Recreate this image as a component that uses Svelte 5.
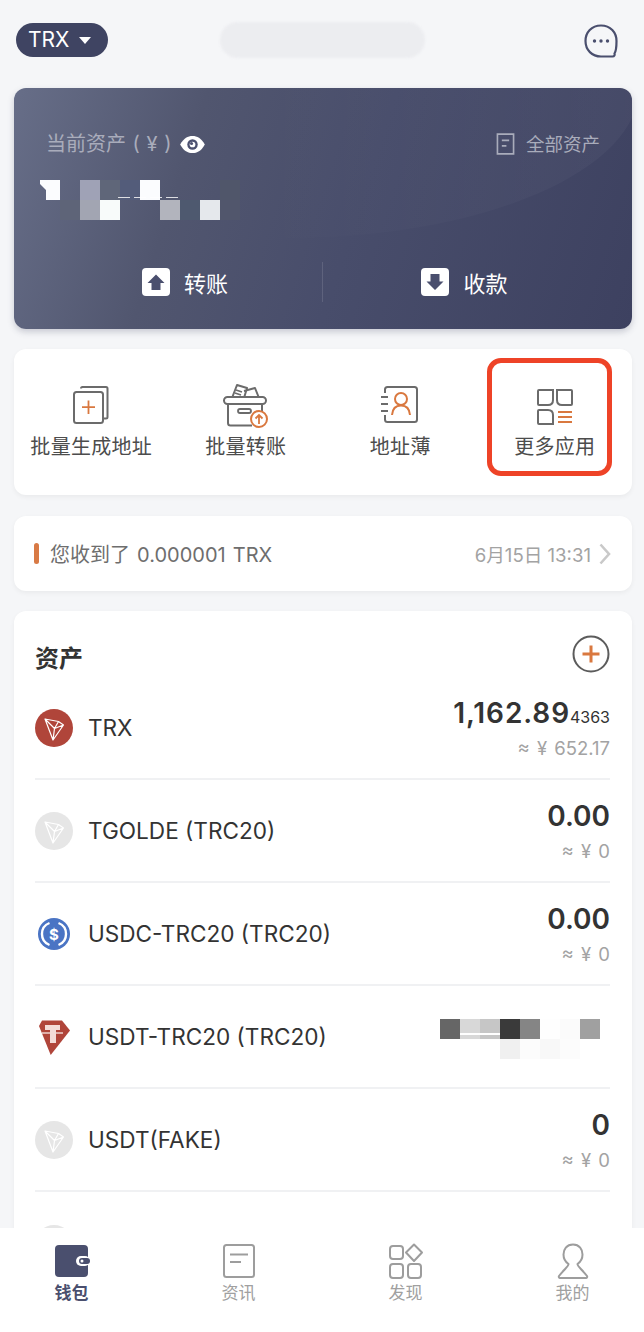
<script lang="ts">
	const balanceCells = [
		['#fbfcfe', 'none', '#9fa2b6', '#5f6679', '#535c7a', '#fbfcfe', 'none', 'none', 'none', '#50566a'],
		['none', '#5e6478', '#a2a5b2', '#f8fbfa', 'none', 'none', '#b2b4bd', '#4e596f', '#e5e8ec', '#51566c']
	];
	const usdtCells = [
		['#666666', '#d8d8d8', '#c6c6c6', '#3a3a3a', '#858585', '#fefefe', '#fbfbfb', '#a0a0a0'],
		['none', 'none', 'none', '#f0f0f0', '#fcfcfc', '#f8f8f8', '#fcfcfc', 'none']
	];

	const assets = [
		{ name: 'TRX', icon: 'trx', amount: '1,162.89', tail: '4363', fiat: '≈ ¥ 652.17' },
		{ name: 'TGOLDE (TRC20)', icon: 'grey', amount: '0.00', fiat: '≈ ¥ 0' },
		{ name: 'USDC-TRC20 (TRC20)', icon: 'usdc', amount: '0.00', fiat: '≈ ¥ 0' },
		{ name: 'USDT-TRC20 (TRC20)', icon: 'usdt', hidden: true },
		{ name: 'USDT(FAKE)', icon: 'grey', amount: '0', fiat: '≈ ¥ 0' },
		{ name: '', icon: 'grey', amount: '0', fiat: '' }
	];
</script>

{#snippet mosaic(rows: string[][])}
	<div class="mosaic">
		{#each rows as row}
			{#each row as c}
				<i style="background:{c}"></i>
			{/each}
		{/each}
		<b class="streak"></b>
	</div>
{/snippet}

{#snippet tron(bg: string, stroke: string)}
	<svg viewBox="0 0 38 38" width="38" height="38">
		<circle cx="19" cy="19" r="19" fill={bg} />
		<path d="M10 10 L23.5 12.5 L28.5 16 L18 31 Z M10 10 L19.5 19.5 L18 31 M19.5 19.5 L28.5 16 M19.5 19.5 L23.5 12.5" fill="none" stroke={stroke} stroke-width="1.2" stroke-linejoin="round" />
	</svg>
{/snippet}

<div class="page">
	<div class="scroll">
		<header class="topbar">
			<div class="chain">TRX <span class="caret"></span></div>
			<div class="smudge"></div>
			<svg class="chat" viewBox="0 0 36 36" width="36" height="36">
				<path d="M18 2.5 C8.5 2.5 2.5 9.5 2.5 18 C2.5 27 9 33.5 18 33.5 L29.5 33.5 C31.5 33.5 32 32 31.5 30.5 C33.5 27.5 33.5 22 33.5 18 C33.5 9.5 27.5 2.5 18 2.5 Z" fill="none" stroke="#4a4f6e" stroke-width="2.2" />
				<circle cx="11.5" cy="18" r="1.7" fill="#4a4f6e" /><circle cx="18" cy="18" r="1.7" fill="#4a4f6e" /><circle cx="24.5" cy="18" r="1.7" fill="#4a4f6e" />
			</svg>
		</header>

		<section class="balance">
			<div class="balance-top">
				<div class="label">
					<span class="current">当前资产 ( ¥ )</span>
					<svg viewBox="0 0 28 20" width="27" height="19">
						<path d="M1 10 C5 3 9 1 14 1 C19 1 23 3 27 10 C23 17 19 19 14 19 C9 19 5 17 1 10 Z" fill="#fff" />
						<circle cx="14" cy="10" r="5.5" fill="#4c5170" />
						<circle cx="14" cy="10" r="3" fill="#fff" />
						<circle cx="13" cy="9" r="1.6" fill="#4c5170" />
					</svg>
				</div>
				<div class="label">
					<svg viewBox="0 0 20 24" width="19" height="22">
						<path d="M1.2 1.2 H18.8 V22.8 H1.2 Z M6 8 H14 M6 14 H11" fill="none" stroke="#a9acbb" stroke-width="1.8" />
					</svg>
					<span class="all">全部资产</span>
				</div>
			</div>
			{@render mosaic(balanceCells)}
			<div class="actions">
				<div class="action">
					<svg viewBox="0 0 28 28" width="28" height="28">
						<rect width="28" height="28" rx="4" fill="#fff" />
						<path d="M14 6.5 L22.5 15 H18.5 V22 H9.5 V15 H5.5 Z" fill="#4a4f6e" />
					</svg>
					<span>转账</span>
				</div>
				<div class="action split">
					<svg viewBox="0 0 28 28" width="28" height="28">
						<rect width="28" height="28" rx="4" fill="#fff" />
						<path d="M14 22 L22.5 13.5 H18.5 V6 H9.5 V13.5 H5.5 Z" fill="#4a4f6e" />
					</svg>
					<span>收款</span>
				</div>
			</div>
		</section>

		<section class="quick">
			<div class="tool">
				<svg viewBox="0 0 40 40" width="40" height="40">
					<path d="M10 3.5 C10 2.5 10.5 2 11.5 2 H35 C36 2 36.5 2.5 36.5 3.5 V32 C36.5 33 36 33.5 35 33.5 H32" fill="none" stroke="#6b6b6b" stroke-width="2" />
					<rect x="3" y="7" width="29" height="31" rx="2.5" fill="#fff" stroke="#6b6b6b" stroke-width="2" />
					<path d="M17.5 15.5 V29 M11 22.2 H24" stroke="#d9783f" stroke-width="1.8" />
				</svg>
				<span>批量生成地址</span>
			</div>
			<div class="tool">
				<svg viewBox="0 0 48 46" width="48" height="46">
					<path d="M10 16 L15 3 L25 6 L22 16 M22 9 L33 6 L37 16" fill="none" stroke="#6b6b6b" stroke-width="2" stroke-linejoin="round" />
					<path d="M14 8 L20 10 M13 11 L19 13" stroke="#6b6b6b" stroke-width="1.6" />
					<rect x="2" y="15" width="42" height="7" rx="3.5" fill="#fff" stroke="#6b6b6b" stroke-width="2" />
					<path d="M6 22 V41 C6 42.5 7 43.5 8.5 43.5 H30 M40 22 V30" fill="none" stroke="#6b6b6b" stroke-width="2" />
					<rect x="16" y="27" width="13" height="4" rx="2" fill="none" stroke="#6b6b6b" stroke-width="1.8" />
					<circle cx="37" cy="37" r="8" fill="#fff" stroke="#d9783f" stroke-width="2" />
					<path d="M37 42 V33 M33.5 36.5 L37 33 L40.5 36.5" fill="none" stroke="#d9783f" stroke-width="1.8" />
				</svg>
				<span>批量转账</span>
			</div>
			<div class="tool">
				<svg viewBox="0 0 40 40" width="40" height="40">
					<path d="M5 8 V4.5 C5 3 6 2 7.5 2 H34.5 C36 2 37 3 37 4.5 V34.5 C37 36 36 37 34.5 37 H7.5 C6 37 5 36 5 34.5 V30" fill="none" stroke="#6b6b6b" stroke-width="2" />
					<path d="M1 12 H8 M1 19 H8 M1 26 H8" stroke="#6b6b6b" stroke-width="1.8" />
					<circle cx="21" cy="14" r="6" fill="none" stroke="#d9783f" stroke-width="2" />
					<path d="M12 30 C12.5 23.5 16 20.5 21 20.5 C26 20.5 29.5 23.5 30 30" fill="none" stroke="#d9783f" stroke-width="2" />
				</svg>
				<span>地址薄</span>
			</div>
			<div class="tool">
				<svg viewBox="0 0 36 36" width="36" height="36">
					<path d="M2 1 H16 V11 C16 14 14 16 11 16 H2 C1.5 16 1 15.5 1 15 V2 C1 1.5 1.5 1 2 1 Z" fill="none" stroke="#6b6b6b" stroke-width="2" />
					<path d="M20 1 H34 C34.5 1 35 1.5 35 2 V15 C35 15.5 34.5 16 34 16 H25 C22 16 20 14 20 11 Z" fill="none" stroke="#6b6b6b" stroke-width="2" />
					<path d="M2 21 H11 C14 21 16 23 16 26 V35 H2 C1.5 35 1 34.5 1 34 V22 C1 21.5 1.5 21 2 21 Z" fill="none" stroke="#6b6b6b" stroke-width="2" />
					<path d="M21 23 H35 M21 28 H35 M21 33 H35" stroke="#d9783f" stroke-width="1.8" />
				</svg>
				<span>更多应用</span>
			</div>
			<div class="highlight"></div>
		</section>

		<section class="notice">
			<span class="tick"></span>
			<span class="notice-text">您收到了 0.000001 TRX</span>
			<span class="notice-date">6月15日 13:31</span>
			<svg viewBox="0 0 12 22" width="12" height="22">
				<path d="M1.5 1.5 L10 11 L1.5 20.5" fill="none" stroke="#c9c9c9" stroke-width="2.6" />
			</svg>
		</section>

		<section class="assets">
			<div class="assets-head">
				<h2>资产</h2>
				<svg viewBox="0 0 38 38" width="38" height="38">
					<circle cx="19" cy="19" r="17.5" fill="none" stroke="#5c5c5c" stroke-width="2" />
					<path d="M19 10.5 V27.5 M10.5 19 H27.5" stroke="#d9783f" stroke-width="3" />
				</svg>
			</div>
			{#each assets as a}
				<div class="asset">
					<span class="coin">
						{#if a.icon === 'trx'}
							{@render tron('#b0453a', '#fff')}
						{:else if a.icon === 'grey'}
							{@render tron('#e6e6e6', '#fff')}
						{:else if a.icon === 'usdc'}
							<svg viewBox="0 0 38 38" width="38" height="38">
								<circle cx="19" cy="19" r="16" fill="#4a74c4" />
								<path d="M14.5 8 A11.8 11.8 0 0 0 14.5 30 M23.5 8 A11.8 11.8 0 0 1 23.5 30" fill="none" stroke="#fff" stroke-width="2.4" />
								<text x="19" y="24.5" text-anchor="middle" class="usd">$</text>
							</svg>
						{:else}
							<svg viewBox="0 0 38 38" width="38" height="38">
								<path d="M7 2.5 H27 L35 12.5 L15.7 37 L4 8 Z" fill="#b0453a" />
								<path d="M10 7 H25 V12 H21 V25 H15 V12 H10 Z" fill="#f3dcd8" />
								<path d="M7 15 H28" stroke="#f3dcd8" stroke-width="1.4" />
							</svg>
						{/if}
					</span>
					<span class="name">{a.name}</span>
					{#if a.hidden}
						{@render mosaic(usdtCells)}
					{:else}
						<div class="figures">
							<div class="amount">{a.amount}{#if a.tail}<small>{a.tail}</small>{/if}</div>
							{#if a.fiat}<div class="fiat">{a.fiat}</div>{/if}
						</div>
					{/if}
				</div>
			{/each}
		</section>
	</div>

	<nav class="tabs">
		<div class="tab active">
			<svg viewBox="0 0 36 36" width="36" height="36">
				<rect x="1" y="2" width="33" height="32" rx="4" fill="#4a4f6e" />
				<rect x="22" y="13" width="14" height="10" rx="5" fill="#fff" />
				<rect x="25" y="15" width="11" height="6" rx="3" fill="#4a4f6e" />
				<circle cx="28" cy="18" r="1.5" fill="#fff" />
			</svg>
			<span>钱包</span>
		</div>
		<div class="tab">
			<svg viewBox="0 0 36 36" width="36" height="36">
				<rect x="3" y="2" width="30" height="32" rx="2.5" fill="none" stroke="#9d9d9d" stroke-width="2" />
				<path d="M9 11.5 H27 M9 19 H20" stroke="#9d9d9d" stroke-width="2" />
			</svg>
			<span>资讯</span>
		</div>
		<div class="tab">
			<svg viewBox="0 0 36 36" width="36" height="36">
				<rect x="2" y="3" width="13" height="13" rx="3" fill="none" stroke="#9d9d9d" stroke-width="2" />
				<path d="M26 1.5 L34 9.5 L26 18 L18 9.5 Z" fill="none" stroke="#9d9d9d" stroke-width="2" stroke-linejoin="round" />
				<rect x="2" y="21" width="13" height="14" rx="3" fill="none" stroke="#9d9d9d" stroke-width="2" />
				<rect x="20" y="21" width="13" height="14" rx="3" fill="none" stroke="#9d9d9d" stroke-width="2" />
			</svg>
			<span>发现</span>
		</div>
		<div class="tab">
			<svg viewBox="0 0 36 36" width="36" height="36">
				<path d="M18 1.5 C11.5 1.5 8.5 6.5 8.5 11.5 C8.5 16 10.5 19 13.5 21 C14 23 10 25.5 4 33 C3.5 34 4 35 5 35 H31 C32 35 32.5 34 32 33 C26 25.5 22 23 22.5 21 C25.5 19 27.5 16 27.5 11.5 C27.5 6.5 24.5 1.5 18 1.5 Z" fill="none" stroke="#9d9d9d" stroke-width="2" />
			</svg>
			<span>我的</span>
		</div>
	</nav>
</div>

<style>
	:global(body) {
		margin: 0;
		background: #f5f6f8;
	}

	.page {
		width: 644px;
		height: 1332px;
		display: flex;
		flex-direction: column;
		overflow: hidden;
		font-family: Inter, "Noto Sans CJK SC", sans-serif;
		color: #333;
	}

	.scroll {
		flex: 1;
		min-height: 0;
		overflow: hidden;
		padding: 0 12px 0 14px;
		display: flex;
		flex-direction: column;
	}

	.topbar {
		height: 88px;
		flex: none;
		display: flex;
		align-items: flex-start;
		padding: 23px 13px 0 2px;
		box-sizing: border-box;
	}

	.chain {
		width: 92px;
		height: 34px;
		box-sizing: border-box;
		padding-left: 12px;
		border-radius: 17px;
		background: #3f4462;
		color: #fff;
		font-size: 21px;
		line-height: 34px;
		display: flex;
		align-items: center;
		gap: 10px;
	}

	.caret {
		width: 0;
		height: 0;
		border: 6.5px solid transparent;
		border-top: 7px solid #fff;
		border-bottom: 0;
	}

	.smudge {
		width: 205px;
		height: 36px;
		margin: -1px 0 0 112px;
		background: #ecedf0;
		border-radius: 18px;
		filter: blur(1px);
	}

	.chat {
		margin-left: auto;
	}

	.balance {
		position: relative;
		height: 241px;
		flex: none;
		box-sizing: border-box;
		padding: 42px 32px 0 32px;
		border-radius: 12px;
		overflow: hidden;
		background: linear-gradient(108deg, #676e88 0%, #51566f 28%, #484d6b 55%, #3d4160 100%);
		box-shadow: 0 3px 6px rgba(70, 75, 105, 0.25);
		color: #fff;
	}

	.balance::before {
		content: "";
		position: absolute;
		top: -150px;
		left: -75px;
		width: 700px;
		height: 300px;
		border-radius: 50%;
		background: linear-gradient(90deg, transparent 45%, rgba(255, 255, 255, 0.035));
	}

	.balance-top {
		position: relative;
		display: flex;
		justify-content: space-between;
		height: 28px;
		color: #a9acbb;
		font-size: 20px;
		line-height: 28px;
	}

	.label {
		display: flex;
		align-items: center;
		gap: 11px;
	}

	.label:first-child {
		gap: 8px;
	}

	.current {
		word-spacing: 1px;
	}

	.all {
		font-size: 18.5px;
	}

	.balance .mosaic {
		margin: 22px 0 0 -6px;
		grid-template-columns: repeat(10, 20px);
	}

	.balance .mosaic i:first-child {
		clip-path: polygon(0 0, 100% 0, 100% 100%, 30% 100%, 30% 50%, 0 20%);
	}

	.mosaic {
		position: relative;
		display: grid;
		grid-template-columns: repeat(8, 20px);
		grid-auto-rows: 20px;
		flex: none;
	}

	.mosaic i {
		display: block;
	}

	.streak {
		position: absolute;
		height: 1px;
	}

	.balance .streak {
		left: 78px;
		top: 17px;
		width: 60px;
		background: repeating-linear-gradient(90deg, rgba(255, 255, 255, 0.8) 0 12px, transparent 12px 16px);
	}

	.asset .streak {
		left: 20px;
		top: 14px;
		width: 40px;
		height: 2px;
		background: #fff;
	}

	.actions {
		position: absolute;
		left: 0;
		right: 0;
		top: 174px;
		height: 40px;
		display: grid;
		grid-template-columns: 308px 1fr;
	}

	.action {
		display: flex;
		align-items: center;
		justify-content: center;
		gap: 14px;
		font-size: 22px;
		padding-left: 34px;
	}

	.split {
		border-left: 1px solid rgba(255, 255, 255, 0.12);
		padding-left: 0;
		padding-right: 26px;
	}

	.quick {
		position: relative;
		margin-top: 20px;
		height: 146px;
		flex: none;
		display: grid;
		grid-template-columns: repeat(4, 1fr);
		border-radius: 12px;
		background: #fff;
		box-shadow: 0 2px 5px rgba(0, 0, 0, 0.05);
	}

	.tool {
		display: flex;
		flex-direction: column;
		align-items: center;
		justify-content: flex-end;
		height: 112px;
		gap: 8px;
		font-size: 20px;
		letter-spacing: 0.3px;
		line-height: 28px;
		color: #4c4c4c;
		white-space: nowrap;
	}

	.tool:nth-child(2) svg {
		margin-bottom: -3px;
	}

	.highlight {
		position: absolute;
		left: 473px;
		top: 9px;
		width: 125px;
		height: 118px;
		box-sizing: border-box;
		border: 5px solid #ee4327;
		border-radius: 14px;
	}

	.notice {
		margin-top: 21px;
		height: 75px;
		flex: none;
		box-sizing: border-box;
		padding: 0 21px 0 20px;
		display: flex;
		align-items: center;
		border-radius: 12px;
		background: #fff;
		box-shadow: 0 2px 5px rgba(0, 0, 0, 0.05);
	}

	.tick {
		width: 5px;
		height: 21px;
		border-radius: 3px;
		background: #d87a45;
		margin-right: 11px;
	}

	.notice-text {
		flex: 1;
		font-size: 20px;
		word-spacing: 1.5px;
		color: #6e6e6e;
	}

	.notice-date {
		font-size: 18.6px;
		color: #a3a3a3;
		margin-right: 8px;
	}

	.assets {
		margin-top: 20px;
		flex: none;
		box-sizing: border-box;
		padding: 0 22px 0 21px;
		border-radius: 12px;
		background: #fff;
		box-shadow: 0 2px 5px rgba(0, 0, 0, 0.05);
	}

	.assets-head {
		height: 66px;
		display: flex;
		align-items: flex-end;
		justify-content: space-between;
	}

	.assets-head svg {
		margin-bottom: 4px;
	}

	h2 {
		margin: 0 0 1px;
		font-size: 24px;
		line-height: 34px;
		font-weight: 700;
		color: #333;
	}

	.asset {
		height: 103px;
		box-sizing: border-box;
		display: flex;
		align-items: center;
		border-bottom: 2px solid #f0f1f3;
	}

	.asset:last-child {
		border-bottom: 0;
	}

	.coin {
		width: 38px;
		height: 38px;
		margin-right: 16px;
		flex: none;
	}

	.coin svg {
		display: block;
	}

	.usd {
		font-size: 15px;
		font-weight: 700;
		fill: #fff;
	}

	.name {
		flex: 1;
		font-size: 22.6px;
		color: #333;
		white-space: nowrap;
		margin-left: -1px;
	}

	.asset .mosaic {
		margin: 5px 10px 0 0;
	}

	.figures {
		text-align: right;
		padding-top: 4px;
	}

	.amount {
		font-size: 28px;
		line-height: 36px;
		font-weight: 600;
		color: #333;
	}

	.amount:has(small) {
		letter-spacing: 0.9px;
	}

	.amount small {
		font-size: 16px;
		font-weight: 400;
		letter-spacing: 0;
		line-height: 0;
	}

	.fiat {
		font-size: 18.5px;
		word-spacing: 2px;
		line-height: 34px;
		color: #a3a3a3;
	}

	.tabs {
		height: 104px;
		flex: none;
		background: #fff;
		display: grid;
		grid-template-columns: repeat(4, 167px);
		justify-content: center;
		position: relative;
	}

	.tab {
		display: flex;
		flex-direction: column;
		align-items: center;
		padding-top: 15px;
		gap: 1px;
		font-size: 17px;
		line-height: 26px;
		color: #a0a0a0;
	}

	.tab.active {
		color: #4a4f6e;
		font-weight: 700;
	}
</style>
